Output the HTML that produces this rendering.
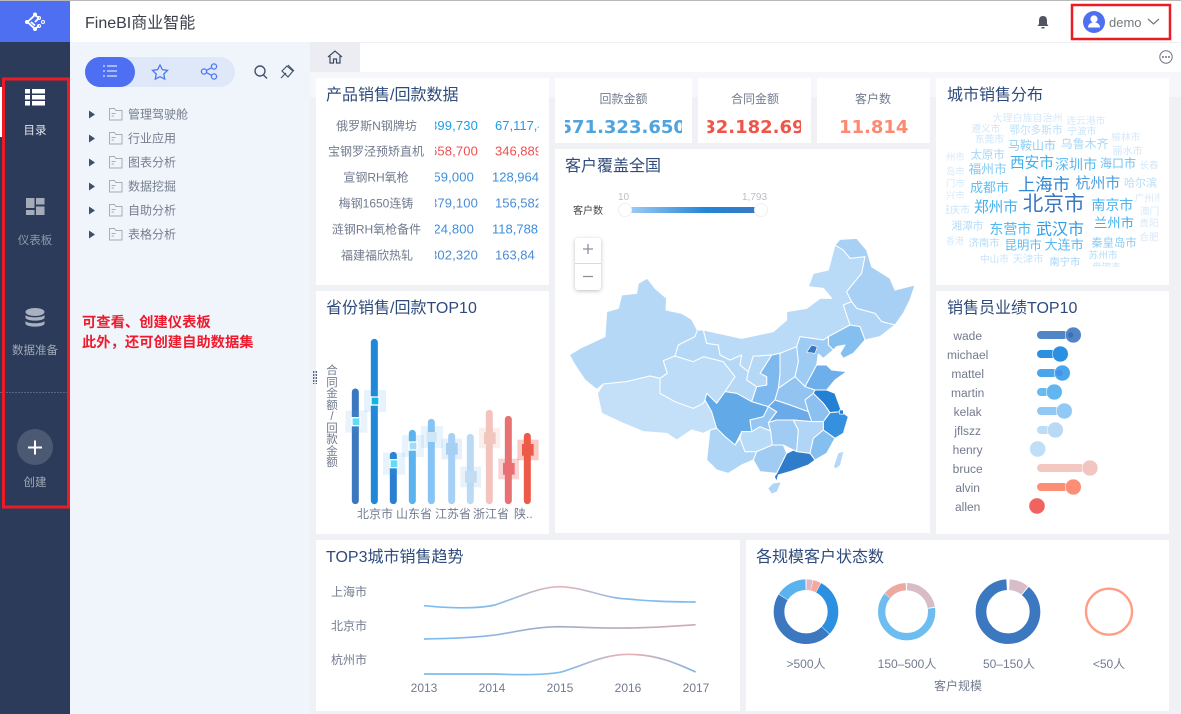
<!DOCTYPE html>
<html lang="zh">
<head>
<meta charset="utf-8">
<title>FineBI商业智能</title>
<style>
html,body{margin:0;padding:0;width:1181px;height:714px;overflow:hidden;background:#eff1f5}
svg{display:block;font-family:"Liberation Sans","Noto Sans CJK SC",sans-serif}
.title{font-size:16px;fill:#2f4b7c}
.g{fill:#727b8e;font-size:12px}
.tree{fill:#757e8e;font-size:12px}
.side{font-size:11.5px;text-anchor:middle;fill:#a4acba}
.kv{font-family:"DejaVu Sans",sans-serif;font-size:18px;font-weight:bold}
.vl{position:absolute;left:325px;top:366px;width:14px;font:11.5px/11.5px "Liberation Sans","Noto Sans CJK SC",sans-serif;color:#727b8e;text-align:center}
</style>
</head>
<body>
<svg width="1181" height="714" viewBox="0 0 1181 714" xmlns="http://www.w3.org/2000/svg">
<defs>
<clipPath id="c2"><rect x="435" y="110" width="45" height="160"/></clipPath>
<clipPath id="c3"><rect x="485" y="110" width="53.500" height="160"/></clipPath>
<clipPath id="k1"><rect x="565" y="110" width="117" height="30"/></clipPath>
<clipPath id="k2"><rect x="707.500" y="110" width="93.500" height="30"/></clipPath>
<clipPath id="wc"><rect x="48" y="330" width="640" height="470"/></clipPath>
<linearGradient id="leg" x1="0" x2="1"><stop offset="0" stop-color="#a8d0f5"/><stop offset=".6" stop-color="#2285d8"/><stop offset="1" stop-color="#3a78c2"/></linearGradient>
<linearGradient id="t1" gradientUnits="userSpaceOnUse" x1="342" x2="1157" y1="0" y2="0"><stop offset=".25" stop-color="#7ebcf0"/><stop offset=".5" stop-color="#edb4b4"/><stop offset=".75" stop-color="#7ebcf0"/></linearGradient>
<linearGradient id="t2" gradientUnits="userSpaceOnUse" x1="342" x2="1157" y1="0" y2="0"><stop offset=".1" stop-color="#7ebcf0"/><stop offset=".5" stop-color="#a5acc8"/><stop offset="1" stop-color="#d3a9b2"/></linearGradient>
<linearGradient id="t3" gradientUnits="userSpaceOnUse" x1="342" x2="1157" y1="0" y2="0"><stop offset=".5" stop-color="#7ebcf0"/><stop offset=".75" stop-color="#edb0b0"/><stop offset="1" stop-color="#7eb4e8"/></linearGradient>
</defs>

<!-- canvas -->
<rect width="1181" height="714" fill="#eff1f5"/>
<rect x="310" y="72" width="871" height="25" fill="#f6f7fa"/>
<rect x="0" y="0" width="1181" height="42" fill="#fff"/>
<rect x="0" y="0" width="1181" height="1" fill="#b9b9b9"/>
<rect x="0" y="1" width="70" height="41" fill="#4f6ff3"/>
<rect x="0" y="42" width="70" height="672" fill="#2c3b59"/>
<rect x="0" y="87" width="2" height="50" fill="#fff"/>
<rect x="70" y="42" width="240" height="672" fill="#f0f5fb"/>
<rect x="310" y="43" width="871" height="29" fill="#fff"/>
<rect x="310" y="42" width="50" height="30" fill="#ebedf2"/>

<!-- logo -->
<g fill="none" stroke="#fff">
<path d="M35 15 L27.500 22 L35 29 L39 25.500 M35 22 L39 18 M31 22 L35 25.500 M35 15 L39 18" stroke-width="1.800"/>
<circle cx="39" cy="18" r="1.500" stroke-width="1"/><circle cx="39" cy="26" r="1.500" stroke-width="1"/><circle cx="43" cy="22" r="1.500" stroke-width="1"/>
<circle cx="35" cy="14.500" r="2" fill="#fff" stroke="none"/><circle cx="27" cy="22" r="2" fill="#fff" stroke="none"/><circle cx="35" cy="29" r="2" fill="#fff" stroke="none"/>
</g>

<!-- rail icons -->
<g fill="#fff"><rect x="25" y="89" width="5" height="4.500"/><rect x="32" y="89" width="13" height="4.500"/><rect x="25" y="95" width="5" height="4.500"/><rect x="32" y="95" width="13" height="4.500"/><rect x="25" y="101" width="5" height="4.500"/><rect x="32" y="101" width="13" height="4.500"/></g>
<text x="35" y="134" class="side" style="fill:#dfe3ea">目录</text>
<g fill="#a4acba"><rect x="26" y="198" width="8.500" height="10"/><rect x="36" y="198" width="8.500" height="6.500"/><rect x="36" y="206.500" width="8.500" height="8.500"/><rect x="26" y="210" width="8.500" height="5"/></g>
<text x="35" y="244" class="side" style="fill:#8f99ab">仪表板</text>
<g fill="#a9b0bf"><ellipse cx="35" cy="312" rx="9.500" ry="4"/><path d="M25.500 315c2 3 17 3 19 0v3c-2 3.500-17 3.500-19 0z"/><path d="M25.500 321c2 3 17 3 19 0v3c-2 3.500-17 3.500-19 0z"/></g>
<text x="35" y="354" class="side" style="fill:#a0a8b7">数据准备</text>
<line x1="0" x2="67" y1="392.500" y2="392.500" stroke="#55658a" stroke-dasharray="2 1"/>
<circle cx="35" cy="447" r="18" fill="#4c5973"/>
<path d="M28 447.500h14M35 440.500v14" stroke="#fff" stroke-width="2"/>
<text x="35" y="486" class="side">创建</text>

<!-- header -->
<text x="85" y="28" font-size="16" fill="#3a3f49">FineBI商业智能</text>
<path d="M1043 16c-3 0-4 2-4 5v3l-1.500 2h11l-1.500-2v-3c0-3-1-5-4-5z M1041.500 27h3v1.500h-3z" fill="#50555f"/>
<circle cx="1094" cy="22" r="11" fill="#4f6ff3"/>
<circle cx="1094" cy="19" r="3.600" fill="#fff"/><path d="M1088 27.500c0-7 12-7 12 0z" fill="#fff"/>
<text x="1109" y="27" font-size="13" fill="#74797f">demo</text>
<path d="M1148 19l5.500 5 5.500-5" fill="none" stroke="#71767d" stroke-width="1.200"/>
<rect x="1072" y="5" width="98" height="34" fill="none" stroke="#ec1c24" stroke-width="2.500"/>

<!-- tab bar -->
<path d="M328 57l7-6 7 6M330 56v7h3.500v-4h3v4h3.500v-7" fill="none" stroke="#3d4a63" stroke-width="1.200"/>
<circle cx="1166" cy="57" r="6.200" fill="none" stroke="#70757f"/>
<g fill="#70757f"><circle cx="1163" cy="57" r="1"/><circle cx="1166" cy="57" r="1"/><circle cx="1169" cy="57" r="1"/></g>

<!-- panel -->
<rect x="85" y="57" width="150" height="30" rx="15" fill="#dfe8f9"/>
<rect x="85" y="57" width="50" height="30" rx="15" fill="#4f6ff3"/>
<g stroke="#fff" stroke-width="1"><path d="M103 66.500h2M107 66.500h10M103 71.500h2M107 71.500h10M103 76.500h2M107 76.500h10" transform="translate(0,-.5)"/></g>
<path d="M160 65l2.400 4.700 5.100.7-3.700 3.600.9 5.100-4.700-2.400-4.700 2.400.9-5.100-3.700-3.600 5.100-.7z" fill="none" stroke="#4f78ef" stroke-width="1.300"/>
<g fill="none" stroke="#4f78ef" stroke-width="1.300"><circle cx="204" cy="71.500" r="2.600"/><circle cx="214" cy="66.500" r="2.600"/><circle cx="214" cy="76.500" r="2.600"/><path d="M206.500 70.300l5-2.500M206.500 72.700l5 2.500"/></g>
<g fill="none" stroke="#46546c" stroke-width="1.400"><circle cx="260" cy="71" r="5"/><path d="M263.500 75l3.500 3.500"/></g>
<g fill="none" stroke="#46546c" stroke-width="1.200"><path d="M282 71l5-5 6 5-5 6z"/><path d="M281 78l5-5M288 65l6 6"/></g>

<g fill="#3f4f6d">
<path d="M89 110.500l6 4-6 4z"/><path d="M89 134.500l6 4-6 4z"/><path d="M89 158.500l6 4-6 4z"/><path d="M89 182.500l6 4-6 4z"/><path d="M89 206.500l6 4-6 4z"/><path d="M89 230.500l6 4-6 4z"/>
</g>
<g fill="none" stroke="#a6acb8">
<path d="M109.500 108.500h5l1.500 2h6v9.500h-12.500zM111.500 113.500h4M111.500 116h2.500"/>
<path d="M109.500 132.500h5l1.500 2h6v9.500h-12.500zM111.500 137.500h4M111.500 140h2.500"/>
<path d="M109.500 156.500h5l1.500 2h6v9.500h-12.500zM111.500 161.500h4M111.500 164h2.500"/>
<path d="M109.500 180.500h5l1.500 2h6v9.500h-12.500zM111.500 185.500h4M111.500 188h2.500"/>
<path d="M109.500 204.500h5l1.500 2h6v9.500h-12.500zM111.500 209.500h4M111.500 212h2.500"/>
<path d="M109.500 228.500h5l1.500 2h6v9.500h-12.500zM111.500 233.500h4M111.500 236h2.500"/>
</g>
<text x="128" y="118.500" class="tree">管理驾驶舱</text>
<text x="128" y="142.500" class="tree">行业应用</text>
<text x="128" y="166.500" class="tree">图表分析</text>
<text x="128" y="190.500" class="tree">数据挖掘</text>
<text x="128" y="214.500" class="tree">自助分析</text>
<text x="128" y="238.500" class="tree">表格分析</text>

<rect x="3.500" y="79" width="65" height="428" fill="none" stroke="#ec1c24" stroke-width="3"/>

<g font-size="14.300" font-weight="bold" fill="#ef1a2d">
<text x="82" y="327">可查看、创建仪表板</text>
<text x="82" y="347">此外&#xFF0C;还可创建自助数据集</text>
</g>

<!-- cards -->
<g fill="#fff">
<rect x="316" y="78" width="233" height="207"/>
<rect x="555" y="78" width="137" height="65"/>
<rect x="698" y="78" width="113" height="65"/>
<rect x="817" y="78" width="113" height="65"/>
<rect x="555" y="149" width="375" height="384"/>
<rect x="936" y="78" width="233" height="207"/>
<rect x="316" y="291" width="233" height="243"/>
<rect x="936" y="291" width="233" height="243"/>
<rect x="316" y="540" width="424" height="171"/>
<rect x="746" y="540" width="423" height="171"/>
</g>

<!-- drag handle -->
<g stroke="#4a5f86" stroke-width="1.300" stroke-dasharray="2 1"><line x1="313.700" x2="313.700" y1="371" y2="384"/><line x1="316.300" x2="316.300" y1="371" y2="384"/></g>

<text x="326" y="100" class="title">产品销售/回款数据</text>
<text x="565" y="171" class="title">客户覆盖全国</text>
<text x="947" y="100" class="title">城市销售分布</text>
<text x="326" y="313" class="title">省份销售/回款TOP10</text>
<text x="947" y="313" class="title">销售员业绩TOP10</text>
<text x="326" y="562" class="title">TOP3城市销售趋势</text>
<text x="756" y="562" class="title">各规模客户状态数</text>

<!-- table -->
<g class="g" text-anchor="middle">
<text x="376.500" y="130">俄罗斯N钢牌坊</text>
<text x="376" y="155.500">宝钢罗泾预矫直机</text>
<text x="376" y="181.500">宣钢RH氧枪</text>
<text x="376" y="207.500">梅钢1650连铸</text>
<text x="376.500" y="233.500">涟钢RH氧枪备件</text>
<text x="377" y="259.500">福建福欣热轧</text>
</g>
<g font-size="13" clip-path="url(#c2)" text-anchor="end" letter-spacing=".15">
<text x="478" y="130" fill="#1e9be8">899,730</text>
<text x="478" y="155.500" fill="#ee4f50">658,700</text>
<text x="474" y="181.500" fill="#3d8fdc">659,000</text>
<text x="478" y="207.500" fill="#4a8cd4">379,100</text>
<text x="474" y="233.500" fill="#3d8fdc">924,800</text>
<text x="478" y="259.500" fill="#4a8cd4">302,320</text>
</g>
<g font-size="13" clip-path="url(#c3)">
<text x="495" y="130" fill="#1e9be8">67,117,4</text>
<text x="495" y="155.500" fill="#ee4f50">346,889</text>
<text x="492" y="181.500" fill="#3d8fdc">128,964</text>
<text x="495" y="207.500" fill="#4a8cd4">156,582</text>
<text x="492" y="233.500" fill="#3d8fdc">118,788</text>
<text x="495" y="259.500" fill="#4a8cd4">163,84</text>
</g>

<!-- KPI -->
<g class="g" text-anchor="middle">
<text x="623.500" y="103">回款金额</text>
<text x="755" y="103">合同金额</text>
<text x="873" y="103">客户数</text>
</g>
<text x="559.500" y="133" class="kv" fill="#4fa3de" clip-path="url(#k1)">571.323.650</text>
<text x="690.700" y="133" class="kv" fill="#ef5649" clip-path="url(#k2)">332.182.69</text>
<text x="839" y="133" class="kv" fill="#fd8a70">11.814</text>

<!-- legend -->
<text x="573" y="214" font-size="10" fill="#444">客户数</text>
<text x="618" y="200" font-size="10" fill="#b9bcc4">10</text>
<text x="742" y="200" font-size="10" fill="#b9bcc4">1,793</text>
<rect x="624" y="207" width="136" height="6" fill="url(#leg)"/>
<circle cx="625" cy="210" r="6.500" fill="#fff" stroke="#eef0f4"/>
<circle cx="761" cy="210" r="6.500" fill="#fff" stroke="#eef0f4"/>

<!-- map -->
<g transform="translate(560,230) scale(.33333)" stroke="#fff" stroke-width="3" stroke-linejoin="round">
<path fill="#b5d8f7" d="M28 375L60 355 135 320 140 245 175 235 185 195 230 190 235 160 262 145 285 175 320 205 318 240 365 250 395 268 412 300 405 320 355 345 345 378 310 392 322 430 300 445 270 438 200 455 130 462 110 478 75 450 45 405Z"/>
<path fill="#c4e0f9" d="M112 490L130 462 200 455 270 438 300 445 300 490 345 515 400 535 430 520 435 510 455 545 470 595 450 600 430 610 395 600 350 630 320 610 250 605 190 580 125 550Z"/>
<path fill="#bcdcf8" d="M300 445L322 430 310 392 345 378 400 395 430 380 490 395 525 440 495 485 470 520 440 490 435 510 430 520 400 535 345 515 300 490Z"/>
<path fill="#b5d8f7" d="M345 378L355 345 405 320 412 300 430 300 440 340 475 345 480 375 510 390 545 375 540 405 565 425 560 450 590 470 575 515 530 490 495 485 525 440 490 395 430 380 400 395Z"/>
<path fill="#b9dbf8" d="M430 300L545 325 640 305 680 270 680 245 740 235 780 205 815 205 790 175 745 170 760 130 805 120 825 45 850 60 870 85 915 80 905 130 860 185 875 215 850 225 870 285 805 320 790 330 720 320 710 350 660 370 635 375 595 378 580 378 565 425 540 405 545 375 510 390 480 375 475 345 440 340Z"/>
<path fill="#a8d0f5" d="M825 45L840 28 890 25 920 60 935 110 990 145 1005 180 1065 165 1050 210 1030 250 1005 285 965 275 945 250 890 235 875 215 860 185 905 130 915 80 870 85 850 60Z"/>
<path fill="#b0d5f6" d="M850 225L875 215 890 235 945 250 965 275 1005 285 960 320 915 330 900 290 870 285Z"/>
<path fill="#85bff0" d="M805 320L870 285 900 290 915 330 880 370 850 385 840 370 855 345 830 350 820 360 805 345Z"/>
<path fill="#9ccbf3" d="M710 350L720 320 790 330 805 320 805 345 820 360 790 385 775 372 770 405 735 470 705 440 715 395Z"/>
<path fill="#3a78c2" stroke-width="2" d="M740 367L755 345 772 350 765 370Z"/>
<path fill="#a8d0f5" d="M660 370L710 350 715 395 705 440 655 475 660 430Z"/>
<path fill="#7db9ee" d="M635 375L660 370 660 430 655 475 645 510 625 530 575 515 590 470 620 465 620 440 600 430 610 415Z"/>
<path fill="#b5d8f7" d="M565 425L580 378 595 378 635 375 610 415 600 430 620 440 620 465 590 470 560 450Z"/>
<path fill="#6eaeea" d="M735 470L770 405 800 405 815 420 860 425 825 450 800 480 765 480Z"/>
<path fill="#92c3f1" d="M655 475L705 440 735 470 765 480 760 490 735 510 745 545 690 525 645 510Z"/>
<path fill="#2480d2" d="M765 480L800 480 825 490 845 545 810 548 790 520 760 490Z"/>
<path fill="#8bc0f0" d="M735 510L760 490 790 520 810 548 790 575 755 575 745 545Z"/>
<path fill="#3590e0" d="M790 575L810 548 845 545 865 560 850 610 825 625 790 600Z"/>
<path fill="#6aaae8" d="M625 530L645 510 690 525 745 545 755 575 700 570 650 570 625 578 650 545Z"/>
<path fill="#62a9e8" d="M435 510L440 490 470 520 495 485 530 490 575 515 625 530 610 560 570 570 575 605 545 605 525 645 495 620 470 595 455 545Z"/>
<path fill="#96c7f2" d="M570 570L610 560 625 530 650 545 625 578 632 603 600 590 575 605Z"/>
<path fill="#aed4f6" d="M470 595L495 620 525 645 540 625 555 665 590 665 580 690 545 705 505 730 470 720 440 690 450 600Z"/>
<path fill="#b8dbf8" d="M540 625L545 605 575 605 600 590 632 603 637 645 590 665 555 665Z"/>
<path fill="#a0ccf4" d="M580 690L590 665 637 645 670 645 680 670 650 730 600 725Z"/>
<path fill="#a0ccf4" d="M625 578L650 570 700 570 715 600 710 665 670 645 637 645 632 603Z"/>
<path fill="#b0d5f6" d="M700 570L755 575 790 575 790 600 760 625 750 670 710 665 715 600Z"/>
<path fill="#85bff0" d="M760 625L790 600 825 625 800 670 765 690 750 670Z"/>
<path fill="#2f7dca" d="M650 730L680 670 700 660 710 665 750 670 765 690 745 705 690 725 655 735 650 755 643 740Z"/>
<path fill="#2480d2" stroke-width="2" d="M838 540L850 540 850 553 838 552Z"/>
<path fill="#b0d5f6" stroke="none" d="M625 775L640 760 662 758 650 785 635 790Z"/>
<path fill="#b5d8f7" stroke="none" d="M822 710L835 670 850 665 840 705 828 715Z"/>
</g>

<!-- zoom control -->
<rect x="575" y="238" width="26" height="52" rx="3" fill="#fff" style="filter:drop-shadow(0 1px 2px rgba(0,0,0,.25))"/>
<line x1="575" x2="601" y1="263.500" y2="263.500" stroke="#d8dade"/>
<path d="M583 249h10M588 244v10M583 276.500h10" stroke="#8a8f98" stroke-width="1.300"/>

<!-- word cloud -->
<g transform="translate(930,0) scale(.33333)" clip-path="url(#wc)">
<text x="188" y="364" font-size="30" fill="#d5e9f9">大理白族自治州</text>
<text x="410" y="372" font-size="29" fill="#d5e9f9">连云港市</text>
<text x="124" y="396" font-size="29" fill="#cfe6f9">遵义市</text>
<text x="238" y="400" font-size="32" fill="#bfe0f8">鄂尔多斯市</text>
<text x="412" y="404" font-size="29" fill="#c8e4f9">宁波市</text>
<text x="544" y="422" font-size="29" fill="#d5e9f9">榆林市</text>
<text x="135" y="428" font-size="29" fill="#c8e4f9">东莞市</text>
<text x="234" y="448" font-size="36" fill="#8ccdf5">马鞍山市</text>
<text x="392" y="444" font-size="36" fill="#a9d8f6">乌鲁木齐</text>
<text x="548" y="464" font-size="30" fill="#cfe6f9">丽水市</text>
<text x="48" y="480" font-size="28" fill="#d5e9f9">州市</text>
<text x="122" y="476" font-size="34" fill="#a5d6f6">太原市</text>
<text x="240" y="503" font-size="44" fill="#3fb0ee">西安市</text>
<text x="375" y="508" font-size="42" fill="#57baf0">深圳市</text>
<text x="510" y="503" font-size="36" fill="#6cc2f2">海口市</text>
<text x="628" y="506" font-size="29" fill="#d5e9f9">长春</text>
<text x="48" y="524" font-size="28" fill="#d5e9f9">岛市</text>
<text x="116" y="520" font-size="38" fill="#82c9f4">福州市</text>
<text x="264" y="572" font-size="52" fill="#2f86d6">上海市</text>
<text x="436" y="564" font-size="45" fill="#4e9fe0">杭州市</text>
<text x="582" y="560" font-size="33" fill="#b5ddf7">哈尔滨</text>
<text x="48" y="560" font-size="28" fill="#d5e9f9">门市</text>
<text x="120" y="576" font-size="39" fill="#5fbdf1">成都市</text>
<text x="48" y="595" font-size="28" fill="#d5e9f9">兴市</text>
<text x="614" y="605" font-size="29" fill="#d5e9f9">广州市</text>
<text x="278" y="632" font-size="62" fill="#3a78c2">北京市</text>
<text x="132" y="636" font-size="44" fill="#3fb0ee">郑州市</text>
<text x="484" y="630" font-size="42" fill="#4eb6f0">南京市</text>
<text x="630" y="644" font-size="29" fill="#d5e9f9">澳门</text>
<text x="30" y="640" font-size="30" fill="#c8e4f9">重庆市</text>
<text x="628" y="680" font-size="29" fill="#d5e9f9">贵阳</text>
<text x="64" y="688" font-size="32" fill="#b5ddf7">湘潭市</text>
<text x="492" y="682" font-size="40" fill="#3fb0ee">兰州市</text>
<text x="178" y="702" font-size="42" fill="#50b7f0">东营市</text>
<text x="318" y="704" font-size="48" fill="#2f9ce8">武汉市</text>
<text x="628" y="722" font-size="29" fill="#d5e9f9">合肥</text>
<text x="48" y="732" font-size="27" fill="#d5e9f9">香港</text>
<text x="116" y="740" font-size="31" fill="#b5ddf7">济南市</text>
<text x="224" y="748" font-size="37" fill="#5fbdf1">昆明市</text>
<text x="344" y="748" font-size="39" fill="#5ab8f0">大连市</text>
<text x="484" y="740" font-size="34" fill="#8ccdf5">秦皇岛市</text>
<text x="476" y="776" font-size="29" fill="#b5ddf7">苏州市</text>
<text x="150" y="788" font-size="29" fill="#c8e4f9">中山市</text>
<text x="248" y="788" font-size="31" fill="#c8e4f9">天津市</text>
<text x="358" y="796" font-size="31" fill="#a5d6f6">南宁市</text>
<text x="486" y="812" font-size="29" fill="#c8e4f9">盘锦市</text>
</g>

<!-- province bars -->
<g transform="translate(310,290) scale(.33333)">
<g stroke-width="21" stroke-linecap="round">
<line x1="136" x2="136" y1="306" y2="632" stroke="#3b78c0"/>
<line x1="193" x2="193" y1="157" y2="632" stroke="#1f88d8"/>
<line x1="250" x2="250" y1="496" y2="632" stroke="#2a80d0"/>
<line x1="307" x2="307" y1="430" y2="632" stroke="#5ab2ee"/>
<line x1="364" x2="364" y1="397" y2="632" stroke="#85c4f4"/>
<line x1="425" x2="425" y1="439" y2="632" stroke="#a6d0f5"/>
<line x1="481" x2="481" y1="442" y2="632" stroke="#bbdaf3"/>
<line x1="538" x2="538" y1="370" y2="632" stroke="#f2c4bd"/>
<line x1="595" x2="595" y1="388" y2="632" stroke="#e87272"/>
<line x1="652" x2="652" y1="439" y2="632" stroke="#ee5a4a"/>
</g>
<g>
<rect x="106" y="362" width="66" height="66" fill="#5fa0e0" opacity=".13"/><rect x="124" y="381" width="28" height="28" fill="#fff"/><rect x="128" y="385" width="20" height="20" fill="#5fdcf8"/>
<rect x="162" y="300" width="66" height="66" fill="#3f9ae8" opacity=".13"/><rect x="181" y="319" width="28" height="28" fill="#fff"/><rect x="185" y="323" width="20" height="20" fill="#10b4e8"/>
<rect x="219" y="488" width="66" height="66" fill="#3f9ae8" opacity=".13"/><rect x="238" y="507" width="28" height="28" fill="#fff"/><rect x="242" y="511" width="20" height="20" fill="#5fdcf8"/>
<rect x="276" y="435" width="66" height="66" fill="#6ab8f0" opacity=".16"/><rect x="295" y="454" width="28" height="28" fill="#fff"/><rect x="299" y="458" width="20" height="20" fill="#a5daf6"/>
<rect x="333" y="408" width="66" height="66" fill="#85c4f4" opacity=".2"/><rect x="350" y="426" width="30" height="30" fill="#cfe6f9"/>
<rect x="394" y="446" width="62" height="62" fill="#a6d0f5" opacity=".3"/><rect x="408" y="459" width="35" height="35" fill="#a6cff2"/>
<rect x="451" y="530" width="62" height="62" fill="#bbdaf3" opacity=".35"/><rect x="465" y="543" width="35" height="35" fill="#c2dcf3"/>
<rect x="507" y="413" width="64" height="62" fill="#f2c4bd" opacity=".28"/><rect x="522" y="427" width="35" height="35" fill="#f0c6bf"/>
<rect x="565" y="506" width="62" height="62" fill="#e87272" opacity=".3"/><rect x="579" y="519" width="35" height="35" fill="#ea6f75"/>
<rect x="622" y="449" width="64" height="62" fill="#ee5a4a" opacity=".32"/><rect x="636" y="462" width="35" height="35" fill="#ee5a4a"/>
</g>
</g>
<text x="357" y="518" class="g">北京市</text>
<text x="396" y="518" class="g">山东省</text>
<text x="435" y="518" class="g">江苏省</text>
<text x="473" y="518" class="g">浙江省</text>
<text x="514" y="518" class="g">陕..</text>

<!-- salesmen -->
<g transform="translate(930,290) scale(.33333)">
<g font-size="36" fill="#727b8e" text-anchor="middle">
<text x="113" y="150">wade</text><text x="113" y="207">michael</text><text x="113" y="264">mattel</text><text x="113" y="321">martin</text><text x="113" y="378">kelak</text><text x="113" y="435">jflszz</text><text x="113" y="492">henry</text><text x="113" y="549">bruce</text><text x="113" y="606">alvin</text><text x="113" y="663">allen</text>
</g>
<g>
<rect x="321" y="123" width="92" height="24" rx="12" fill="#5285c6"/><circle cx="430" cy="135" r="24" fill="#5285c6" stroke="#fff" stroke-width="1.500"/><circle cx="422" cy="135" r="8" fill="#3b6fb5"/>
<rect x="321" y="180" width="55" height="24" rx="12" fill="#2b90e2"/><circle cx="391" cy="192" r="24" fill="#2b90e2" stroke="#fff" stroke-width="1.500"/>
<rect x="321" y="237" width="60" height="24" rx="12" fill="#4aa6ec"/><circle cx="397" cy="249" r="24" fill="#4aa6ec" stroke="#fff" stroke-width="1.500"/><circle cx="388" cy="249" r="10" fill="#4a8fe8"/>
<rect x="321" y="294" width="36" height="24" rx="12" fill="#68baf0"/><circle cx="373" cy="306" r="24" fill="#62b6ef" stroke="#fff" stroke-width="1.500"/>
<rect x="321" y="351" width="66" height="24" rx="12" fill="#92c9f4"/><circle cx="403" cy="363" r="24" fill="#92c9f4" stroke="#fff" stroke-width="1.500"/>
<rect x="321" y="408" width="38" height="24" rx="12" fill="#bddcf5"/><circle cx="376" cy="420" r="24" fill="#b9d9f5" stroke="#fff" stroke-width="1.500"/>
<circle cx="323" cy="477" r="24" fill="#bfdef8" stroke="#fff" stroke-width="1"/>
<rect x="321" y="522" width="142" height="24" rx="12" fill="#f3c8c2"/><circle cx="480" cy="534" r="24" fill="#f1c6c0" stroke="#fff" stroke-width="1.500"/>
<rect x="321" y="579" width="92" height="24" rx="12" fill="#fd8e76"/><circle cx="430" cy="591" r="24" fill="#fd8e76" stroke="#fff" stroke-width="1.500"/>
<circle cx="321" cy="648" r="24" fill="#f0645f" stroke="#fff" stroke-width="1"/>
</g>
</g>

<!-- trend -->
<g transform="translate(310,535) scale(.33333)" fill="none" stroke-width="5">
<path stroke="url(#t1)" d="M342 212C430 220 500 222 555 210C630 185 690 155 750 155C830 158 880 190 955 192C1030 200 1090 200 1157 201"/>
<path stroke="url(#t2)" d="M342 312C430 310 500 308 570 298C640 285 690 275 750 275C830 277 880 280 955 279C1030 278 1090 274 1157 269"/>
<path stroke="url(#t3)" d="M342 417L550 417C640 420 700 420 750 412C820 392 880 358 955 358C1040 358 1100 385 1157 411"/>
</g>
<text x="331" y="596" class="g">上海市</text>
<text x="331" y="630" class="g">北京市</text>
<text x="331" y="664" class="g">杭州市</text>
<g class="g" text-anchor="middle">
<text x="424" y="692">2013</text><text x="492" y="692">2014</text><text x="560" y="692">2015</text><text x="628" y="692">2016</text><text x="696" y="692">2017</text>
</g>

<!-- donuts -->
<g transform="translate(740,535) scale(.33333)" fill="none">
<g transform="rotate(-90 198 230)" stroke-width="32">
<circle cx="198" cy="230" r="81" pathLength="360" stroke="#dcb9c3" stroke-dasharray="11 349" stroke-dashoffset="-1"/>
<circle cx="198" cy="230" r="81" pathLength="360" stroke="#f5a8a0" stroke-dasharray="14 346" stroke-dashoffset="-13"/>
<circle cx="198" cy="230" r="81" pathLength="360" stroke="#2b90e2" stroke-dasharray="105 255" stroke-dashoffset="-28"/>
<circle cx="198" cy="230" r="81" pathLength="360" stroke="#3b78c0" stroke-dasharray="168 192" stroke-dashoffset="-134"/>
<circle cx="198" cy="230" r="81" pathLength="360" stroke="#5ab3ee" stroke-dasharray="56 304" stroke-dashoffset="-303"/>
</g>
<g transform="rotate(-90 500 230)" stroke-width="22">
<circle cx="500" cy="230" r="75" pathLength="360" stroke="#d8bcc8" stroke-dasharray="79 281" stroke-dashoffset="-1"/>
<circle cx="500" cy="230" r="75" pathLength="360" stroke="#6dbdf0" stroke-dasharray="227 133" stroke-dashoffset="-82"/>
<circle cx="500" cy="230" r="75" pathLength="360" stroke="#eba9a0" stroke-dasharray="48 312" stroke-dashoffset="-310"/>
</g>
<g transform="rotate(-90 804 230)" stroke-width="32">
<circle cx="804" cy="230" r="81" pathLength="360" stroke="#d8bcc8" stroke-dasharray="35 325" stroke-dashoffset="-3"/>
<circle cx="804" cy="230" r="81" pathLength="360" stroke="#3b78c0" stroke-dasharray="317 43" stroke-dashoffset="-40"/>
</g>
<circle cx="1107" cy="230" r="69" stroke="#ff9d85" stroke-width="7"/>
</g>
<g class="g" text-anchor="middle">
<text x="806" y="668">&gt;500人</text>
<text x="907" y="668">150–500人</text>
<text x="1009" y="668">50–150人</text>
<text x="1109" y="668">&lt;50人</text>
<text x="958" y="690">客户规模</text>
</g>
</svg>
<div class="vl">合<br>同<br>金<br>额<br>/<br>回<br>款<br>金<br>额</div>
</body>
</html>
